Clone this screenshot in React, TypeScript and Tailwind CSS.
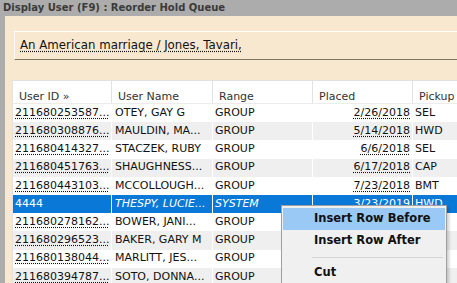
import React from 'react'

type Row = {
  id: string
  name: string
  range: string
  placed: string
  pickup: string
}

// dates and pickups of the last rows sit under the context menu
const rows: Row[] = [
  { id: '211680253587...', name: 'OTEY, GAY G', range: 'GROUP', placed: '2/26/2018', pickup: 'SEL' },
  { id: '211680308876...', name: 'MAULDIN, MA...', range: 'GROUP', placed: '5/14/2018', pickup: 'HWD' },
  { id: '211680414327...', name: 'STACZEK, RUBY', range: 'GROUP', placed: '6/6/2018', pickup: 'SEL' },
  { id: '211680451763...', name: 'SHAUGHNESS...', range: 'GROUP', placed: '6/17/2018', pickup: 'CAP' },
  { id: '211680443103...', name: 'MCCOLLOUGH...', range: 'GROUP', placed: '7/23/2018', pickup: 'BMT' },
  { id: '4444', name: 'THESPY, LUCIE...', range: 'SYSTEM', placed: '3/23/2019', pickup: 'HWD' },
  { id: '211680278162...', name: 'BOWER, JANI...', range: 'GROUP', placed: '', pickup: '' },
  { id: '211680296523...', name: 'BAKER, GARY M', range: 'GROUP', placed: '', pickup: '' },
  { id: '211680138044...', name: 'MARLITT, JES...', range: 'GROUP', placed: '', pickup: '' },
  { id: '211680394787...', name: 'SOTO, DONNA...', range: 'GROUP', placed: '', pickup: '' },
]

const SELECTED = 5

function HoldRow({ row, index }: { row: Row; index: number }) {
  const selected = index === SELECTED
  const bg = selected ? 'bg-[#0a78d7] text-white' : index % 2 === 1 ? 'bg-[#efefef] text-[#111]' : 'bg-white text-[#111]'

  return (
    <div className={`flex h-[18.2px] items-center whitespace-nowrap ${bg}`}>
      <div className="w-[99px] shrink-0 self-stretch flex items-center border-r border-white pl-[2px]">
        <span className={selected ? '' : 'underline decoration-dotted underline-offset-[2px]'}>{row.id}</span>
      </div>
      <div className={`w-[101px] shrink-0 self-stretch flex items-center border-r border-white pl-[3px] ${selected ? 'italic' : ''}`}>{row.name}</div>
      <div className={`w-[100px] shrink-0 self-stretch flex items-center border-r border-white pl-[2px] ${selected ? 'italic' : ''}`}>{row.range}</div>
      <div className="w-[100px] shrink-0 self-stretch flex items-center justify-end border-r border-white pr-[2px]">
        <span className="underline decoration-dotted underline-offset-[2px]">{row.placed}</span>
      </div>
      <div className="flex-1 pl-[2px]">{row.pickup}</div>
    </div>
  )
}

function ContextMenu() {
  return (
    <div className="absolute left-[281px] top-[205px] w-[166px] border border-[#a0a0a0] bg-[#f0f0f0] pt-[2px] px-[1px] pb-[4px] text-[11.5px] font-bold text-[#111] shadow-[2px_2px_3px_rgba(0,0,0,0.2)]">
      <div className="flex h-[22px] items-center bg-[#99c9f4] pl-[31px]">Insert Row Before</div>
      <div className="flex h-[22px] items-center pl-[31px]">Insert Row After</div>
      <div className="flex h-[10px] items-center pl-[29px] pr-[2px]">
        <div className="h-px w-full bg-[#d4d4d4]" />
      </div>
      <div className="flex h-[22px] items-center pl-[31px]">Cut</div>
    </div>
  )
}

export default function App() {
  return (
    <div className="relative flex h-[283px] w-[457px] flex-col overflow-hidden font-['DejaVu_Sans',Verdana,sans-serif]">
      {/* window title */}
      <div className="h-[16px] shrink-0 bg-[#acacac] pl-[3px] text-[10px] font-bold leading-[16px] text-[#3a3a3a]">
        Display User (F9) : Reorder Hold Queue
      </div>

      <div className="flex flex-1">
        <div className="w-[5px] shrink-0 bg-[#acacac]" />
        <div className="flex-1 bg-[#f7e8cf] pl-[7px] pt-[15px]">
          {/* item title box */}
          <div className="ml-[2px] flex h-[29px] items-center border-t border-l border-b border-t-white border-l-white border-b-[#77776a] pl-[5px] pt-[1px] text-[11.8px] text-[#111]">
            <span className="underline decoration-dotted underline-offset-[2px] whitespace-nowrap">An American marriage / Jones, Tavari,</span>
          </div>

          {/* hold queue table */}
          <div className="mt-[20px] border-t border-l border-[#e2e2e2] bg-white text-[11px]">
            <div className="flex h-[23px] whitespace-nowrap border-b border-[#ececec] text-[#333]">
              <div className="w-[99px] shrink-0 border-r border-[#e2e2e2] pl-[6px] pt-[8px]">User ID »</div>
              <div className="w-[101px] shrink-0 border-r border-[#e2e2e2] pl-[6px] pt-[8px]">User Name</div>
              <div className="w-[100px] shrink-0 border-r border-[#e2e2e2] pl-[6px] pt-[8px]">Range</div>
              <div className="w-[100px] shrink-0 border-r border-[#e2e2e2] pl-[6px] pt-[8px]">Placed</div>
              <div className="flex-1 pl-[6px] pt-[8px]">Pickup</div>
            </div>
            {rows.map((row, i) => (
              <HoldRow key={row.id} row={row} index={i} />
            ))}
          </div>
        </div>
      </div>

      <ContextMenu />
    </div>
  )
}
